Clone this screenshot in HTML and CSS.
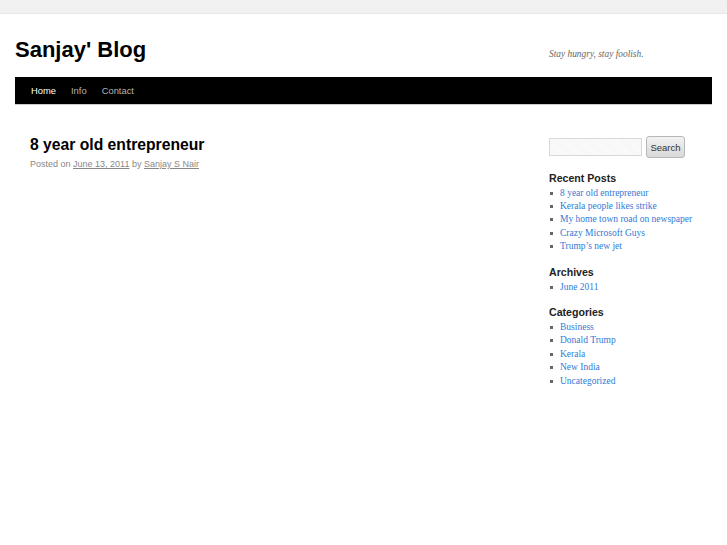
FILE: index.html
```html
<!DOCTYPE html>
<html>
<head>
<meta charset="utf-8">
<title>Sanjay' Blog</title>
<link rel="stylesheet" href="styles.css">
</head>
<body>
<div class="topbar"></div>
<div class="wrapper">
  <header class="header">
    <h1 class="site-title">Sanjay' Blog</h1>
    <div class="tagline">Stay hungry, stay foolish.</div>
  </header>
  <nav class="nav">
    <a class="nav-item current" href="#">Home</a>
    <a class="nav-item" href="#">Info</a>
    <a class="nav-item" href="#">Contact</a>
  </nav>
  <div class="main">
    <div class="content">
      <h2 class="post-title">8 year old entrepreneur</h2>
      <div class="meta">Posted on <a href="#">June 13, 2011</a> by <a href="#">Sanjay S Nair</a></div>
    </div>
    <aside class="sidebar">
      <form class="search">
        <input class="search-input" type="text">
        <button class="search-btn" type="button">Search</button>
      </form>
      <div class="widget">
        <h3 class="widget-title">Recent Posts</h3>
        <ul class="widget-list">
          <li><a href="#">8 year old entrepreneur</a></li>
          <li><a href="#">Kerala people likes strike</a></li>
          <li><a href="#">My home town road on newspaper</a></li>
          <li><a href="#">Crazy Microsoft Guys</a></li>
          <li><a href="#">Trump’s new jet</a></li>
        </ul>
      </div>
      <div class="widget">
        <h3 class="widget-title">Archives</h3>
        <ul class="widget-list">
          <li><a href="#">June 2011</a></li>
        </ul>
      </div>
      <div class="widget">
        <h3 class="widget-title">Categories</h3>
        <ul class="widget-list">
          <li><a href="#">Business</a></li>
          <li><a href="#">Donald Trump</a></li>
          <li><a href="#">Kerala</a></li>
          <li><a href="#">New India</a></li>
          <li><a href="#">Uncategorized</a></li>
        </ul>
      </div>
    </aside>
  </div>
</div>
</body>
</html>
```
FILE: styles.css
```css
html, body {
  margin: 0;
  padding: 0;
  background: #fff;
  font-family: "Liberation Sans", Arial, sans-serif;
  color: #222;
}
.topbar {
  height: 14px;
  background: #f1f1f1;
  border-bottom: 1px solid #e8e8e8;
  box-sizing: border-box;
}
.wrapper {
  padding: 0 15px;
}
.header {
  display: flex;
  justify-content: space-between;
  align-items: baseline;
  padding-top: 25px;
  height: 63px;
  box-sizing: border-box;
}
.site-title {
  margin: 0;
  font-size: 22px;
  line-height: 22px;
  font-weight: bold;
  color: #000;
}
.tagline {
  width: 163px;
  font-family: "Liberation Serif", "Times New Roman", serif;
  font-style: italic;
  font-size: 9.4px;
  color: #666;
}
.nav {
  display: flex;
  align-items: center;
  padding-left: 8.5px;
  height: 27px;
  background: #000;
  border-bottom: 1px solid #ccc;
}
.nav-item {
  font-size: 9.4px;
  color: #b4b4b4;
  text-decoration: none;
  padding: 0 7.5px;
}
.nav-item.current {
  color: #fff;
}
.main {
  display: grid;
  grid-template-columns: 1fr 163px;
}
.content {
  padding: 30px 0 0 15px;
}
.post-title {
  margin: 0;
  font-size: 15.7px;
  line-height: 20px;
  font-weight: bold;
  color: #000;
}
.meta {
  margin-top: 2px;
  font-size: 9px;
  line-height: 14px;
  color: #888;
}
.meta a {
  color: #888;
}
.sidebar {
  padding-top: 31px;
}
.search {
  display: flex;
  align-items: center;
  gap: 4px;
  margin: 0 0 14px 0;
}
.search-input {
  width: 93px;
  height: 18px;
  box-sizing: border-box;
  border: 1px solid #d8d8d8;
  background: repeating-linear-gradient(45deg, #f6f6f6 0 1px, #fbfbfb 1px 2px);
  padding: 0;
  margin: 0;
}
.search-btn {
  width: 39px;
  height: 22px;
  box-sizing: border-box;
  padding: 0;
  margin: 0;
  border: 1px solid #b8b8b8;
  border-radius: 3px;
  background: linear-gradient(#f2f2f2, #d9d9d9);
  font-family: "Liberation Sans", Arial, sans-serif;
  font-size: 9.5px;
  color: #333;
}
.widget {
  margin-bottom: 12.5px;
}
.widget-title {
  margin: 0 0 1.5px 0;
  font-size: 10.6px;
  line-height: 13px;
  font-weight: bold;
  color: #222;
}
.widget-list {
  list-style: none;
  margin: 0;
  padding: 0;
}
.widget-list li {
  position: relative;
  padding-left: 11px;
  font-family: "Liberation Serif", "Times New Roman", serif;
  font-size: 9.5px;
  line-height: 13.4px;
}
.widget-list li::before {
  content: "";
  position: absolute;
  left: 1px;
  top: 5px;
  width: 3px;
  height: 3px;
  background: #666;
}
.widget-list a {
  color: #2f7ad6;
  text-decoration: none;
}
```
